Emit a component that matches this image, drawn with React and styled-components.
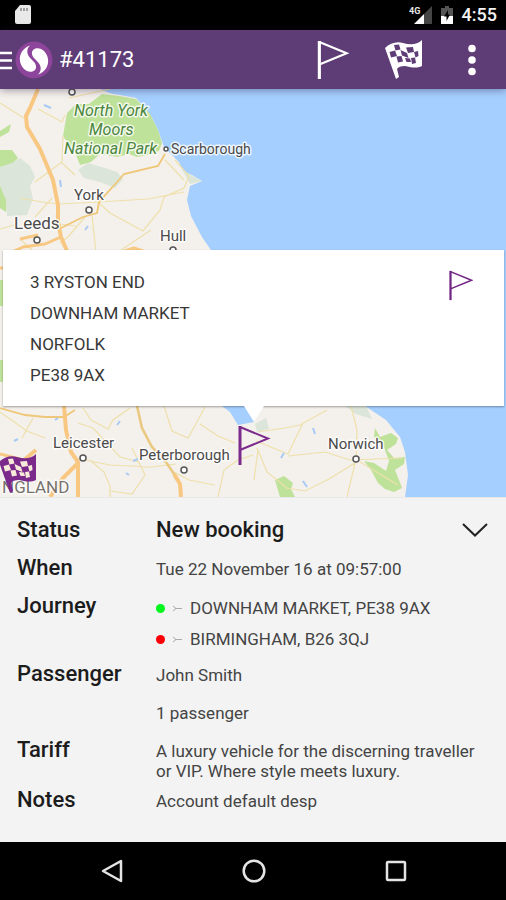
import React from "react";
import styled, { createGlobalStyle } from "styled-components";

const GlobalStyle = createGlobalStyle`
  *, *::before, *::after { box-sizing: border-box; }
  body {
    margin: 0;
    background: #f3f3f3;
    color: #1c1c1c;
    font-family: Roboto, "Noto Sans", sans-serif;
  }
`;

const Screen = styled.div`
  display: flex;
  flex-direction: column;
  min-height: 100vh;
`;

const StatusBar = styled.div`
  display: flex;
  align-items: center;
  gap: 9px;
  height: 30px;
  padding: 0 9px 0 15px;
  background: #000;
  color: #f4f4f4;
  font-size: 18px;
  font-weight: 500;
`;

const Spacer = styled.span`
  flex: 1;
`;

const Clock = styled.time`
  line-height: 20px;
`;

const AppBar = styled.header`
  position: relative;
  z-index: 1;
  display: flex;
  align-items: center;
  height: 59px;
  padding-right: 20px;
  background: #5e3c76;
  box-shadow: 0 1px 8px rgba(40, 20, 60, 0.45);
`;

const IconButton = styled.button`
  display: flex;
  align-items: center;
  justify-content: center;
  padding: 0;
  border: 0;
  background: none;
  color: inherit;
  cursor: pointer;
`;

const Title = styled.h1`
  flex: 1;
  margin: 0 0 0 6px;
  color: #fff;
  font-size: 22px;
  font-weight: 400;
  line-height: 28px;
`;

const Actions = styled.div`
  display: flex;
  align-items: center;
  gap: 35px;
`;

const MapArea = styled.main`
  position: relative;
  flex: 1;
  min-height: 360px;
  padding: 161px 2px 0 3px;
  background: #a5cfff;
`;

const MapCanvas = styled.svg`
  position: absolute;
  inset: 0;
  width: 100%;
  height: 100%;
`;

const Callout = styled.section`
  position: relative;
  display: flex;
  justify-content: space-between;
  align-items: flex-start;
  padding: 17px 31px 15px 27px;
  background: #fff;
  box-shadow: 0 1px 2px rgba(0, 0, 0, 0.35);

  &::after {
    content: "";
    position: absolute;
    top: 100%;
    left: 50%;
    border: 10px solid transparent;
    border-top: 16px solid #fff;
    border-bottom: 0;
    transform: translateX(-50%);
  }
`;

const Address = styled.address`
  color: #383838;
  font-size: 17px;
  font-style: normal;
  line-height: 31px;
`;

const CalloutFlag = styled.div`
  padding-top: 3px;
`;

const Details = styled.dl`
  margin: 0;
  padding: 19px 17px 17px;
  border-top: 1px solid #e8e8e8;
  background: #f3f3f3;
`;

const Row = styled.div`
  display: grid;
  grid-template-columns: 139px 1fr;
  align-items: baseline;
  padding-bottom: ${(p) => (p.$tight ? 6 : 12)}px;
`;

const Label = styled.dt`
  font-size: 22px;
  font-weight: 500;
  line-height: 26px;
`;

const Value = styled.dd`
  margin: 0;
  color: #444;
  font-size: 17px;
  line-height: ${(p) => p.$leading || 20}px;
`;

const StatusValue = styled.dd`
  display: flex;
  align-items: center;
  justify-content: space-between;
  margin: 0;
  font-size: 22px;
  font-weight: 500;
  line-height: 26px;
`;

const Stop = styled.div`
  display: flex;
  align-items: center;
`;

const StopDot = styled.span`
  width: 9px;
  height: 9px;
  margin-right: 8px;
  border-radius: 50%;
  background: ${(p) => p.$color};
`;

const StopArrow = styled.svg`
  margin-right: 8px;
`;

const NavBar = styled.nav`
  display: grid;
  grid-template-columns: repeat(3, 1fr);
  height: 58px;
  padding: 0 39px 0 41px;
  background: #000;
`;

const PlaceName = styled.text`
  font-size: ${(p) => p.$size || 15}px;
  font-style: ${(p) => (p.$park ? "italic" : "normal")};
  fill: ${(p) => (p.$park ? "#4b8640" : p.$muted ? "#77736d" : "#4a4a4a")};
  stroke: rgba(255, 255, 255, 0.8);
  stroke-width: 3px;
  stroke-linejoin: round;
  paint-order: stroke;
`;

function FlagShape({ color, width = 2 }) {
  return (
    <g fill="none" stroke={color} strokeWidth={width}>
      <path d="M2 1V40" strokeWidth={width + 1} />
      <path d="M2 2 30 13.500 2 25" />
    </g>
  );
}

function CheckeredShape({ color, cells }) {
  return (
    <g>
      <path
        fill={color}
        d="M0 8C5 3 12 1 18 3C25 5 32 5 37 0V26C31 29 25 27 20 26C16 26 13 27 12 29L14 37 11 39Z"
      />
      <path
        fill={cells}
        d="M9 5 14 4.500 15.500 9.500 10.500 10.500ZM21 7.500 28 7 29 12 23 13ZM4.500 12 10 10.500 12 16 6 17.500ZM15.500 10 22 13 23.500 18 17 15.500ZM29 12 33 11 33.500 16 30.500 17.500ZM11.500 16.500 16.500 16 18 21.500 13 22.500ZM20 18 25 18.500 26 22 21.500 22ZM26 18 30 17.500 31 23 27 24Z"
      />
    </g>
  );
}

function Logo() {
  const drop =
    "M15 4.500C8 7 4 13 5 20C6 27 12 32 17.500 30.500C22 29 22 24.500 19 21C16.500 18 13.500 16 12.500 12.500C11.800 9 13 6 15 4.500Z";
  return (
    <svg width="38" height="38" viewBox="0 0 38 38" aria-hidden="true">
      <circle cx="19" cy="19" r="18.500" fill="#8c459a" />
      <path d={drop} fill="#fff" />
      <path d={drop} fill="#fff" transform="rotate(180 19 19)" />
    </svg>
  );
}

const towns = [
  [72, 92],
  [166, 149, 2],
  [89, 210],
  [37, 240],
  [173, 250],
  [83, 458],
  [184, 470],
  [356, 459],
];

function RegionMap() {
  return (
    <MapCanvas
      viewBox="0 89 506 408"
      preserveAspectRatio="xMidYMid slice"
      role="img"
      aria-label="Map of eastern England"
    >
      <rect y="89" width="506" height="408" fill="#a5cfff" />
      <path
        fill="#f4f0eb"
        d="M0 89H101Q108 94 120 95L136 98 150 114 158 130 164 147 179 162 183 171 192 175 202 181 190 186 187 200 191 216 202 237 213 253 240 300 218 350 216 394 222 406 230 412 238 425 254 422 262 405 290 394 365 406 386 420 400 437 405 452 408 475 405 497H0Z"
      />
      <g fill="#bfe29a">
        <path d="M67 113 76 104 89 104 102 94 119 96 136 99 150 114 158 130 162 143 159 151 148 155 137 157 129 154 117 157 100 154 91 162 80 165 76 155 63 136Z" />
        <path d="M0 131 11 124 9 132 0 137ZM0 150 12 150 18 158 12 164 0 167ZM0 180 7 200 6 212 0 208Z" />
        <path d="M375 428 380 437 391 433 398 438 396 444 387 450 394 458 405 457 404 464 395 470 399 480 402 488 394 492 385 489 378 483 371 470 364 461 374 463 386 471 389 461 385 450 382 442 374 437Z" />
        <path d="M275 480 284 476 293 483 291 489 295 497H280Z" />
        <path d="M0 280H3V306H0ZM0 360H3V382H0Z" />
      </g>
      <g fill="#dbe5d9">
        <path d="M0 167 12 163 20 158 30 166 35 177 30 186 33 199 27 215 7 216 6 200 0 186Z" />
        <path d="M78 170 88 163 105 168 117 172 123 179 115 188 100 182 84 178Z" />
        <path d="M183 171 202 181 190 184Z" />
        <path d="M255 424 266 418 269 429 257 432ZM345 406 366 406 372 419 356 414Z" />
      </g>
      <g fill="none" stroke="#eee0ab" strokeWidth="1.200">
        <path d="M0 103 24 118M38 109 62 122 65 115M63 136 62 162 35 182M62 163 75 175M110 89 69 98M20 198 42 202 58 204 98 202 148 199 184 192M35 217 52 198M98 202 110 213 143 231 160 210 164 197 184 188 189 176 175 160M92 216 96 252M121 250 151 230M85 217 68 237 60 243M0 229 14 225M50 223 76 226M32 250 20 239M165 160 184 180" />
        <path d="M0 412 27 431 45 438M22 438 33 418M78 423 93 428 120 457 139 462M75 458 110 465 151 467 176 464M83 408 91 420 108 429 113 420 130 408M110 497V486L104 472 90 460M111 491 132 494 145 475 132 448M164 406 172 431 188 438 198 420 205 407M200 424 218 436 235 443M218 497 224 470 238 460 253 455M172 471 189 480 215 485M258 432 285 428 300 425 327 410M303 423 288 454 256 441M288 456 325 452 350 460 403 458M351 406 357 430 356 459 347 497M355 463 329 479 305 491 286 488M360 462 398 485M258 450 254 480M257 448 267 472 287 488" />
      </g>
      <g fill="none" stroke="#efc778" strokeWidth="1.800">
        <path d="M59 229 83 217 97 213 99 202 118 181 124 174 158 166 165 154M0 408 25 415 45 417 64 417M64 417 75 410" />
        <path d="M137 406 142 428 152 447 166 462 176 477" stroke="#eac982" strokeWidth="2.600" />
      </g>
      <g fill="none" stroke="#f8c883" strokeLinejoin="round">
        <path
          d="M38 89 30 108 26 116 27 127 40 149 53 180 58 205 58 222 61 237 67 251"
          strokeWidth="4"
        />
        <path d="M61 237 45 244 23 247 12 252M20 239 38 235M122 252 134 248 146 252" strokeWidth="3" />
        <path d="M64 406 66 430 71 452 78 462 78 497M78 463 63 478 50 497M36 450 24 460M174 474 180 484 181 497" strokeWidth="4" />
        <path d="M0 454 20 459 33 476M0 268H3" strokeWidth="3" />
      </g>
      <path
        d="M44 105 51 108M60 180 61 187M85 230 88 226M133 461 138 459M313 428 315 434M281 458 284 453M303 481 307 487M126 473 129 475M55 420 58 418M117 425 120 421M14 441 18 439"
        stroke="#a8caf4"
        strokeWidth="2"
      />
      <g fill="#fff" stroke="#555" strokeWidth="1.500">
        {towns.map(([x, y, r = 3]) => (
          <circle key={`${x}-${y}`} cx={x} cy={y} r={r} />
        ))}
      </g>
      <PlaceName $park $size={16} x="74" y="116">North York</PlaceName>
      <PlaceName $park $size={16} x="89" y="135">Moors</PlaceName>
      <PlaceName $park $size={16} x="64" y="154">National Park</PlaceName>
      <PlaceName $size={14} x="171" y="154">Scarborough</PlaceName>
      <PlaceName x="74" y="200">York</PlaceName>
      <PlaceName $size={17} x="14" y="229">Leeds</PlaceName>
      <PlaceName x="160" y="241">Hull</PlaceName>
      <PlaceName x="53" y="448">Leicester</PlaceName>
      <PlaceName x="139" y="460">Peterborough</PlaceName>
      <PlaceName x="328" y="449">Norwich</PlaceName>
      <PlaceName $muted $size={17} x="2" y="493">NGLAND</PlaceName>
      <g transform="translate(238 425)">
        <FlagShape color="#7b2a8c" />
      </g>
      <g transform="translate(-1 454)">
        <CheckeredShape color="#7b2a8c" cells="#f7ead9" />
      </g>
    </MapCanvas>
  );
}

const stops = [
  { color: "#00f81c", place: "DOWNHAM MARKET, PE38 9AX" },
  { color: "#fb0007", place: "BIRMINGHAM, B26 3QJ" },
];

export default function App() {
  return (
    <>
      <GlobalStyle />
      <Screen>
        <StatusBar>
          <svg width="16" height="20" viewBox="0 0 16 20" aria-hidden="true">
            <path d="M5 0H14Q16 0 16 2V17Q16 19 14 19H2Q0 19 0 17V6Z" fill="#e9e9e9" />
            <path d="M6 3V6M9 3V6M12 3V6" stroke="#888" strokeWidth="1.500" />
          </svg>
          <Spacer />
          <svg width="23" height="20" viewBox="0 0 23 20" role="img" aria-label="4G signal">
            <path d="M15 9 23 1V19H15Z" fill="#454545" />
            <path d="M5 19 15 9V19Z" fill="#fff" />
            <text x="0" y="9" fontSize="9" fontWeight="700" fill="#e8e8e8">4G</text>
          </svg>
          <svg width="12" height="20" viewBox="0 0 12 20" role="img" aria-label="Battery charging">
            <path d="M4 1H8V3H12V19H0V3H4Z" fill="#555" />
            <path d="M0 11H12V19H0Z" fill="#fff" />
            <path d="M7 5 3 11.500H5.500V16L9 9.500H7Z" fill="#000" />
          </svg>
          <Clock>4:55</Clock>
        </StatusBar>

        <AppBar>
          <IconButton type="button" aria-label="Open menu">
            <svg width="15" height="20" viewBox="0 0 15 20" aria-hidden="true">
              <path d="M0 3H12M0 10.500H12M0 18H12" stroke="#fff" strokeWidth="2.600" />
            </svg>
            <Logo />
          </IconButton>
          <Title>#41173</Title>
          <Actions>
            <IconButton type="button" aria-label="Pickup point">
              <svg width="33" height="40" viewBox="0 0 33 41">
                <FlagShape color="#fff" width={2.2} />
              </svg>
            </IconButton>
            <IconButton type="button" aria-label="Destination">
              <svg width="38" height="40" viewBox="0 0 38 40">
                <CheckeredShape color="#fff" cells="#5e3c76" />
              </svg>
            </IconButton>
            <IconButton type="button" aria-label="More options">
              <svg width="28" height="32" viewBox="0 0 28 32">
                <g fill="#fff">
                  <circle cx="14" cy="4.500" r="3.800" />
                  <circle cx="14" cy="16" r="3.800" />
                  <circle cx="14" cy="27.500" r="3.800" />
                </g>
              </svg>
            </IconButton>
          </Actions>
        </AppBar>

        <MapArea>
          <RegionMap />
          <Callout aria-label="Pickup address">
            <Address>
              3 RYSTON END
              <br />
              DOWNHAM MARKET
              <br />
              NORFOLK
              <br />
              PE38 9AX
            </Address>
            <CalloutFlag>
              <svg width="24" height="31" viewBox="0 0 32 41" aria-hidden="true">
                <FlagShape color="#722583" />
              </svg>
            </CalloutFlag>
          </Callout>
        </MapArea>

        <Details>
          <Row>
            <Label>Status</Label>
            <StatusValue>
              New booking
              <IconButton type="button" aria-label="Collapse details">
                <svg width="28" height="16" viewBox="0 0 28 16">
                  <path d="M2 2 14 13.500 26 2" fill="none" stroke="#222" strokeWidth="2" />
                </svg>
              </IconButton>
            </StatusValue>
          </Row>
          <Row>
            <Label>When</Label>
            <Value>Tue 22 November 16 at 09:57:00</Value>
          </Row>
          <Row $tight>
            <Label>Journey</Label>
            <Value $leading={31}>
              {stops.map((stop) => (
                <Stop key={stop.place}>
                  <StopDot $color={stop.color} />
                  <StopArrow width="9" height="7" viewBox="0 0 9 7" aria-hidden="true">
                    <path d="M0 1 3 3.500 0 6M2 3.500H9" fill="none" stroke="#aaa" />
                  </StopArrow>
                  {stop.place}
                </Stop>
              ))}
            </Value>
          </Row>
          <Row>
            <Label>Passenger</Label>
            <Value>John Smith</Value>
          </Row>
          <Row>
            <Label aria-hidden="true">&nbsp;</Label>
            <Value>1 passenger</Value>
          </Row>
          <Row $tight>
            <Label>Tariff</Label>
            <Value>
              A luxury vehicle for the discerning traveller or VIP. Where style meets luxury.
            </Value>
          </Row>
          <Row>
            <Label>Notes</Label>
            <Value>Account default desp</Value>
          </Row>
        </Details>

        <NavBar aria-label="System navigation">
          <IconButton type="button" aria-label="Back">
            <svg width="24" height="24" viewBox="0 0 24 24">
              <path d="M21 2V22L3 12Z" fill="none" stroke="#e4e4e4" strokeWidth="2.500" strokeLinejoin="round" />
            </svg>
          </IconButton>
          <IconButton type="button" aria-label="Home">
            <svg width="24" height="24" viewBox="0 0 24 24">
              <circle cx="12" cy="12" r="10.300" fill="none" stroke="#e4e4e4" strokeWidth="2.500" />
            </svg>
          </IconButton>
          <IconButton type="button" aria-label="Recent apps">
            <svg width="24" height="24" viewBox="0 0 24 24">
              <rect x="3" y="3" width="18" height="18" rx="1" fill="none" stroke="#e4e4e4" strokeWidth="2.500" />
            </svg>
          </IconButton>
        </NavBar>
      </Screen>
    </>
  );
}
